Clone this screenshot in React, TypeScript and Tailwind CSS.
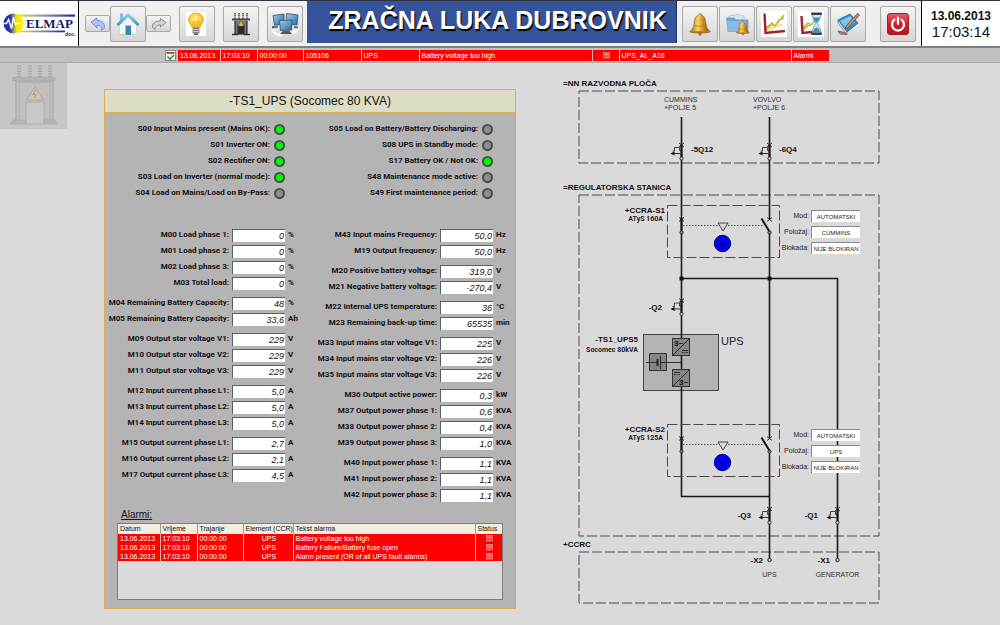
import React, { useId } from "react";

type Metric = { label: string; value: string; unit: string };
type Status = { label: string; on: boolean };

const leftStatuses: Status[] = [
  { label: "S00 Input Mains present (Mains OK):", on: true },
  { label: "S01 Inverter ON:", on: true },
  { label: "S02 Rectifier ON:", on: true },
  { label: "S03 Load on Inverter (normal mode):", on: true },
  { label: "S04 Load on Mains/Load on By-Pass:", on: false },
];

const rightStatuses: Status[] = [
  { label: "S05 Load on Battery/Battery Discharging:", on: false },
  { label: "S08 UPS in Standby mode:", on: false },
  { label: "S17 Battery OK / Not OK:", on: true },
  { label: "S48 Maintenance mode active:", on: false },
  { label: "S49 First maintenance period:", on: false },
];

const m = (label: string, value: string, unit: string): Metric => ({ label, value, unit });

const leftMetrics: Metric[][] = [
  [
    m("M00 Load phase 1:", "0", "%"),
    m("M01 Load phase 2:", "0", "%"),
    m("M02 Load phase 3:", "0", "%"),
    m("M03 Total load:", "0", "%"),
  ],
  [
    m("M04 Remaining Battery Capacity:", "48", "%"),
    m("M05 Remaining Battery Capacity:", "33,6", "Ah"),
  ],
  [
    m("M09 Output star voltage V1:", "229", "V"),
    m("M10 Output star voltage V2:", "229", "V"),
    m("M11 Output star voltage V3:", "229", "V"),
  ],
  [
    m("M12 Input current phase L1:", "5,0", "A"),
    m("M13 Input current phase L2:", "5,0", "A"),
    m("M14 Input current phase L3:", "5,0", "A"),
  ],
  [
    m("M15 Output current phase L1:", "2,7", "A"),
    m("M16 Output current phase L2:", "2,1", "A"),
    m("M17 Output current phase L3:", "4,5", "A"),
  ],
];

const rightMetrics: Metric[][] = [
  [
    m("M43 Input mains Frequency:", "50,0", "Hz"),
    m("M19 Output frequency:", "50,0", "Hz"),
  ],
  [
    m("M20 Positive battery voltage:", "319,0", "V"),
    m("M21 Negative battery voltage:", "-270,4", "V"),
  ],
  [
    m("M22 Internal UPS temperature:", "36", "°C"),
    m("M23 Remaining back-up time:", "65535", "min"),
  ],
  [
    m("M33 Input mains star voltage V1:", "225", "V"),
    m("M34 Input mains star voltage V2:", "226", "V"),
    m("M35 Input mains star voltage V3:", "226", "V"),
  ],
  [
    m("M36 Output active power:", "0,3", "kW"),
    m("M37 Output power phase 1:", "0,6", "KVA"),
    m("M38 Output power phase 2:", "0,4", "KVA"),
    m("M39 Output power phase 3:", "1,0", "KVA"),
  ],
  [
    m("M40 Input power phase 1:", "1,1", "KVA"),
    m("M41 Input power phase 2:", "1,1", "KVA"),
    m("M42 Input power phase 3:", "1,1", "KVA"),
  ],
];

const alarms = [
  "Battery voltage too high",
  "Battery Failure/Battery fuse open",
  "Alarm present (OR of all UPS fault alarms)",
];

/* ---------- icons ---------- */

function LogoMark() {
  return (
    <svg viewBox="0 0 76 28" className="h-7 w-[76px]" aria-label="ELMAP d.o.o.">
      <defs>
        <linearGradient id="logo-disc">
          <stop offset="0" stopColor="#1c2a9c" />
          <stop offset="0.35" stopColor="#2a3cc0" />
          <stop offset="0.65" stopColor="#f2e600" />
          <stop offset="1" stopColor="#fff200" />
        </linearGradient>
        <linearGradient id="logo-bar">
          <stop offset="0" stopColor="#f6ee30" />
          <stop offset="0.5" stopColor="#8f96a0" />
          <stop offset="1" stopColor="#1c2a9c" />
        </linearGradient>
      </defs>
      <rect x="12" y="4.500" width="62" height="2.200" fill="url(#logo-bar)" />
      <rect x="14" y="20.500" width="50" height="1.800" fill="url(#logo-bar)" />
      <circle cx="12.500" cy="13.500" r="10" fill="url(#logo-disc)" />
      <path d="M2.500 13.500h3l2-4 3 9 2-11 2 7 1-1h3" fill="none" stroke="#fff" strokeWidth="1.400" />
      <text x="25" y="18" className="font-['Liberation_Serif',serif] text-[13px] font-bold" fill="#14186e">ELMAP</text>
      <text x="64" y="26" className="font-['Liberation_Sans',sans-serif] text-[5px] font-bold" fill="#14186e">doo.</text>
    </svg>
  );
}

function UndoIcon() {
  return (
    <svg viewBox="0 0 16 14" className="h-[14px] w-4">
      <path d="M1 5 7 1v2.500c5 0 8 3 7.500 6.500-.5 2-2 3-3.500 3.300 1.500-2 .5-5-4-5V11z" fill="#a9c5f5" stroke="#5d86d6" strokeWidth="0.800" />
    </svg>
  );
}

function RedoIcon() {
  return (
    <svg viewBox="0 0 16 14" className="h-[14px] w-4">
      <path d="M15 5.500 9.500 1.500v2.300C5 3.800 1.500 6 1.500 9c0 2 1 3 2.800 3.500C3.500 10 6 8 9.500 8v2z" fill="#d4d4d4" stroke="#7b7b7b" strokeWidth="0.800" />
    </svg>
  );
}

function HomeIcon() {
  return (
    <svg viewBox="0 0 26 26" className="size-[26px]">
      <defs>
        <linearGradient id="home-roof" x2="0" y2="1">
          <stop offset="0" stopColor="#8fd0e6" />
          <stop offset="1" stopColor="#3493bd" />
        </linearGradient>
      </defs>
      <path d="M4.500 13v10h17V13L13 5z" fill="#f5f6f7" stroke="#d3d7da" strokeWidth="0.800" />
      <path d="M5 2.500h3v5L5 10z" fill="#7cc3de" />
      <path d="M2.500 14 13 4l10.500 10" fill="none" stroke="url(#home-roof)" strokeWidth="3" />
      <rect x="10.500" y="14.500" width="5.500" height="9.500" fill="#3689b5" />
      <path d="M3.500 24h8" stroke="#c4c8cb" strokeWidth="1" />
    </svg>
  );
}

function BulbIcon() {
  return (
    <svg viewBox="0 0 24 24" className="size-6">
      <rect width="20" height="24" x="1" fill="#fff" />
      <defs>
        <radialGradient id="bulb" cx="0.450" cy="0.400">
          <stop offset="0" stopColor="#fff6b0" />
          <stop offset="0.600" stopColor="#fbd43c" />
          <stop offset="1" stopColor="#f5b82c" />
        </radialGradient>
      </defs>
      <path d="M11 1c-4.500 0-7.500 3-7.500 6.800 0 3.200 2.500 4.700 3.500 7.700h8c1-3 3.500-4.500 3.500-7.700C18.500 4 15.500 1 11 1z" fill="url(#bulb)" stroke="#e0a028" strokeWidth="0.700" />
      <path d="m9.500 15-1-6 1.500 1.500 1-1.500 1 1.500L13.500 9l-1 6" fill="none" stroke="#e0a030" strokeWidth="0.600" />
      <rect x="7.500" y="15.500" width="7" height="6" rx="1.200" fill="#8b8574" />
      <path d="M7.500 17.500h7m-7 2h7" stroke="#d8d2be" strokeWidth="0.800" />
      <rect x="9" y="21.500" width="4" height="1.500" rx="0.700" fill="#4a463c" />
    </svg>
  );
}

function TransformerIcon() {
  return (
    <svg viewBox="0 0 22 24" className="h-6 w-[22px]">
      <path d="M5 1v6m4-6v6m4-6v6m4-6v6" stroke="#6d6d6d" strokeWidth="2" strokeDasharray="1.200 0.500" />
      <rect x="2" y="6.500" width="18" height="2" fill="#4b4b4b" />
      <rect x="4" y="8.500" width="14" height="14" fill="#777" />
      <path d="M5.500 9v13m11-13v13" stroke="#444" />
      <rect x="7.500" y="13" width="7" height="9.500" fill="#2c2c2c" />
      <path d="M11 9 13.500 14h-5z" fill="#f4c842" stroke="#8a6a10" strokeWidth="0.500" />
      <path d="M2 22.500h6m6 0h6" stroke="#333" strokeWidth="1.500" />
    </svg>
  );
}

function ComputersIcon() {
  return (
    <svg viewBox="0 0 32 26" className="h-[26px] w-8">
      <defs>
        <linearGradient id="screen" x2="1" y2="1">
          <stop offset="0" stopColor="#9fd4f2" />
          <stop offset="1" stopColor="#2467a3" />
        </linearGradient>
      </defs>
      <path d="M4 18c0 4 4 6 9 6m15-9c1 4 0 6-5 7" fill="none" stroke="#fafafa" strokeWidth="3" />
      <path d="M4 4.500 15 3v10L5.500 14z" fill="url(#screen)" stroke="#33475a" strokeWidth="0.800" />
      <path d="M17.500 2.500 29 4l-1 10-11-1z" fill="url(#screen)" stroke="#33475a" strokeWidth="0.800" />
      <path d="M10.500 9.500 23 9l-.5 10-11 .5z" fill="url(#screen)" stroke="#33475a" strokeWidth="0.800" />
      <path d="m14 20 6-.3 3 3.300H11z" fill="#4d5b66" />
      <path d="m3 15 6-.5v2L3 17.500z M25 15l4 .5v2l-4-.5z" fill="#5a6973" />
    </svg>
  );
}

function BellShape() {
  return (
    <>
      <path d="M13 2.500c-1 0-1.700.7-1.700 1.700C8 5.200 7.500 9 7 13c-.4 3.500-1.500 5.500-4 7.500h20c-2.500-2-3.600-4-4-7.500-.5-4-1-7.800-4.300-8.800 0-1-.7-1.700-1.700-1.700z" fill="url(#gold)" stroke="#8a5c10" strokeWidth="0.600" />
      <path d="M2.500 20.500c2 2 19 2 21 0" fill="#c88a1e" stroke="#8a5c10" strokeWidth="0.800" />
      <circle cx="13" cy="23" r="1.600" fill="#a36c14" />
      <path d="M7.500 14.500c3 1 8 1 11 0" fill="none" stroke="#9a6814" strokeWidth="0.600" />
    </>
  );
}

function BellIcon() {
  return (
    <svg viewBox="0 0 26 26" className="size-[26px]">
      <defs>
        <linearGradient id="gold">
          <stop offset="0" stopColor="#a86c12" />
          <stop offset="0.400" stopColor="#f6d268" />
          <stop offset="0.650" stopColor="#cf8e22" />
          <stop offset="1" stopColor="#80520c" />
        </linearGradient>
      </defs>
      <BellShape />
    </svg>
  );
}

function FolderBellIcon() {
  return (
    <svg viewBox="0 0 26 26" className="size-[26px]">
      <path d="M5 5 14 3.500 20 5v4H5z" fill="#d9e8f5" stroke="#9bb8d4" strokeWidth="0.600" />
      <path d="M2.500 7h8l1.500 2h12v11.500h-20z" fill="#6fa4da" stroke="#5b8fc4" strokeWidth="0.600" />
      <path d="M2.500 10h20l-1 10.500h-18z" fill="#94bee6" opacity="0.800" />
      <g transform="translate(10.500 8.500) scale(0.640)">
        <BellShape />
      </g>
    </svg>
  );
}

function ChartIcon() {
  return (
    <svg viewBox="0 0 26 26" className="size-[26px]">
      <rect width="26" height="26" fill="#fff" />
      <path d="m5 17 6-5 3 3 9-11" fill="none" stroke="#7bb64a" strokeWidth="1.200" />
      <path d="m5 19 5-5 4 1 4-6 5-2" fill="none" stroke="#f0b428" strokeWidth="1.800" />
      <path d="m8 20 6-4 7-3" fill="none" stroke="#f0d050" strokeWidth="1.200" />
      <path d="M3.500 2.500 4.500 22 24 20" fill="none" stroke="#a3202c" strokeWidth="2.400" />
    </svg>
  );
}

function HourglassChartIcon() {
  return (
    <svg viewBox="0 0 26 26" className="size-[26px]">
      <rect width="26" height="26" fill="#fff" />
      <path d="m5 17 5-5 3 2 6-7" fill="none" stroke="#7bb64a" strokeWidth="1.200" />
      <path d="m5 19 5-4 5-2" fill="none" stroke="#f0b428" strokeWidth="1.800" />
      <path d="M3.500 5 4.500 22 20 20.500" fill="none" stroke="#a3202c" strokeWidth="2.400" />
      <path d="M14 3h9c0 5-3 7-3.500 9.500C20 15 23 17 23 22h-9c0-5 3-7 3.500-9.500C17 10 14 8 14 3z" fill="#cfe8f4" stroke="#56788a" strokeWidth="0.700" />
      <path d="M15 6.500h7c-.8 2.500-2.500 4-3.500 5.500-1-1.500-2.700-3-3.500-5.500zM15 21c.5-3 2-4 3.500-4.500C20 17 21.500 18 22 21z" fill="#3f8fb5" />
      <rect x="13" y="1.500" width="11" height="2.500" rx="1" fill="#34424c" />
      <rect x="13" y="21.500" width="11" height="2.500" rx="1" fill="#34424c" />
    </svg>
  );
}

function NotebookIcon() {
  return (
    <svg viewBox="0 0 26 26" className="size-[26px]">
      <path d="m3 9 12-6 8 9-11 9z" fill="#2f8fce" stroke="#1c5f96" strokeWidth="0.800" />
      <path d="m5 10 10-5 5 6-9 7z" fill="#7cc6ee" />
      <path d="m3 9 9 12v2.500L3 12z" fill="#e6eef4" stroke="#1c5f96" strokeWidth="0.600" />
      <path d="M22.500 2.500 24.500 4 13 17l-3 1 1-3z" fill="#c58a5e" stroke="#5f3b22" strokeWidth="0.700" />
      <path d="m3 20 7 1.500 1.500 2L5 23z" fill="#b98b6a" stroke="#6a4a30" strokeWidth="0.700" />
    </svg>
  );
}

function PowerIcon() {
  return (
    <svg viewBox="0 0 22 22" className="size-[22px]">
      <defs>
        <linearGradient id="power" x2="0" y2="1">
          <stop offset="0" stopColor="#e4606a" />
          <stop offset="0.500" stopColor="#d0222c" />
          <stop offset="1" stopColor="#b8121e" />
        </linearGradient>
      </defs>
      <rect x="0.500" y="0.500" width="21" height="21" rx="2.500" fill="url(#power)" stroke="#a81c26" />
      <path d="M7.500 6.700a6 6 0 1 0 7 0" fill="none" stroke="#fff" strokeWidth="2.200" strokeLinecap="round" />
      <path d="M11 4.500v6.500" stroke="#fff" strokeWidth="2.200" strokeLinecap="round" />
    </svg>
  );
}

function AckIcon() {
  return (
    <svg viewBox="0 0 11 11" className="size-[11px]">
      <rect x="0.500" y="0.500" width="10" height="10" fill="#eef2ee" stroke="#8a8a8a" />
      <rect x="1.500" y="2" width="8" height="1.800" fill="#c23a34" />
      <path d="m2.500 6.500 2.500 2.500L9 5" fill="none" stroke="#3f9a3a" strokeWidth="1.700" />
    </svg>
  );
}

function StatusMark() {
  return (
    <svg viewBox="0 0 7 7" className="mx-auto block size-[7px]" aria-label="active">
      <rect x="0.500" y="0.500" width="6" height="5.500" fill="#ff3b3b" stroke="#ff8a8a" strokeWidth="0.800" />
      <path d="M1 2.500h5M3.500 1v4.500" stroke="#ff9c9c" strokeWidth="0.800" />
    </svg>
  );
}

function StationWatermark() {
  return (
    <svg viewBox="0 0 67 66" className="block h-[66px] w-[67px]">
      <rect width="67" height="66" fill="#c6c6c6" />
      <g fill="none" stroke="#adadad">
        <path d="M19 2v14M30 2v14M40 2v14M50 2v14" strokeWidth="4" strokeDasharray="1.500 1.200" />
        <rect x="13" y="14.500" width="42" height="3" fill="#b4b4b4" />
        <rect x="16" y="19" width="37" height="41" fill="#c0c0c0" strokeWidth="1.500" />
        <path d="M19 21v36M50 21v36" />
        <rect x="26" y="39" width="18" height="22" fill="#c9c9c9" />
        <path d="M10 61h16v-4H13zM57 61H44v-4h11z" fill="#b4b4b4" />
      </g>
      <path d="M35 24 43.500 37h-17z" fill="#cbc7b6" stroke="#b0aa94" />
      <path d="m35.500 27-2.500 4.500h3L34.500 35" fill="none" stroke="#a39a78" />
    </svg>
  );
}

/* ---------- header ---------- */

function ToolButton({ label, small, children }: { label: string; small?: boolean; children: React.ReactNode }) {
  return (
    <button
      type="button"
      aria-label={label}
      className={
        "flex shrink-0 items-center justify-center overflow-hidden rounded-xs border border-[#a9a9a9] bg-linear-to-b from-[#f4f4f4] to-[#d6d6d6] " +
        (small ? "h-[17px] w-[25px]" : "size-9")
      }
    >
      {children}
    </button>
  );
}

function Header() {
  return (
    <header className="flex h-12 items-center border-t border-b-2 border-t-[#33333d] border-b-[#808080] bg-[#f0f0f0]">
      <div className="flex h-full w-[79px] shrink-0 items-center justify-center border-r border-black bg-white">
        <LogoMark />
      </div>
      <nav className="ml-1.5 flex items-center" aria-label="Navigation">
        <ToolButton label="Back" small><UndoIcon /></ToolButton>
        <ToolButton label="Home"><HomeIcon /></ToolButton>
        <ToolButton label="Forward" small><RedoIcon /></ToolButton>
      </nav>
      <div className="ml-2 flex items-center gap-2">
        <ToolButton label="Lighting"><BulbIcon /></ToolButton>
        <ToolButton label="Substation"><TransformerIcon /></ToolButton>
        <ToolButton label="Network"><ComputersIcon /></ToolButton>
      </div>
      <h1 className="ml-1 flex h-[42px] min-w-0 flex-1 items-center justify-center self-start overflow-hidden border-r border-[#1d2f66] bg-[#34539a] pb-1 pl-3 text-[25px] leading-[38px] font-bold whitespace-nowrap text-white [text-shadow:1px_2px_1px_#000]">
        ZRAČNA LUKA DUBROVNIK
      </h1>
      <div className="ml-[5px] flex items-center gap-px">
        <ToolButton label="Alarms"><BellIcon /></ToolButton>
        <ToolButton label="Alarm archive"><FolderBellIcon /></ToolButton>
        <ToolButton label="Trends"><ChartIcon /></ToolButton>
        <ToolButton label="Trend history"><HourglassChartIcon /></ToolButton>
        <ToolButton label="Notes"><NotebookIcon /></ToolButton>
      </div>
      <div className="mr-[5px] ml-3.5">
        <ToolButton label="Shut down"><PowerIcon /></ToolButton>
      </div>
      <div className="flex h-full w-[79px] shrink-0 flex-col items-center justify-center border-l border-black bg-white">
        <time className="text-xs leading-[15px] font-bold">13.06.2013</time>
        <time className="text-[15px] leading-[15px]">17:03:14</time>
      </div>
    </header>
  );
}

function AlarmLine() {
  const cell = "border-l border-[#ffb0b0] p-0 pl-0.5 font-normal first:border-l-0";
  return (
    <div className="flex h-[15px] items-center gap-0.5 border-b border-[#a8a8a8] bg-[#c0c0c0] pl-[165px]">
      <button type="button" aria-label="Acknowledge"><AckIcon /></button>
      <table className="w-[651px] table-fixed border-collapse bg-[#fe0000] text-left text-[7px] leading-[11px] whitespace-nowrap text-white">
        <colgroup>
          <col className="w-[42px]" />
          <col className="w-[37px]" />
          <col className="w-[46px]" />
          <col className="w-[58px]" />
          <col className="w-[58px]" />
          <col className="w-[173px]" />
          <col className="w-[27px]" />
          <col className="w-[172px]" />
          <col className="w-[38px]" />
        </colgroup>
        <tbody>
          <tr>
            <td className={cell}>13.06.2013</td>
            <td className={cell}>17:03:10</td>
            <td className={cell}>00:00:00</td>
            <td className={cell}>105106</td>
            <td className={cell}>UPS</td>
            <td className={cell}>Battery voltage too high</td>
            <td className={cell}><StatusMark /></td>
            <td className={cell}>UPS_AL_A16</td>
            <td className={cell}>Alarmi</td>
          </tr>
        </tbody>
      </table>
    </div>
  );
}

/* ---------- UPS panel ---------- */

function StatusRow({ label, on }: Status) {
  return (
    <li className="flex h-4 items-center justify-end gap-1">
      <span>{label}</span>
      <span
        role="img"
        aria-label={on ? "on" : "off"}
        className={"size-[11px] shrink-0 rounded-full border-2 border-[#4a4a4a] " + (on ? "bg-[#00fb00]" : "bg-[#8e8e8e]")}
      />
    </li>
  );
}

function MetricRow({ label, value, unit }: Metric) {
  const id = useId();
  return (
    <div className="flex h-4 items-center justify-end gap-[3px]">
      <label htmlFor={id}>{label}</label>
      <input
        id={id}
        readOnly
        value={value}
        className="h-[13px] w-[53px] shrink-0 border-t border-l border-[#5f5f5f] bg-white pr-px text-right font-['Liberation_Sans',Arial,sans-serif] text-[9px] leading-3 font-normal italic outline-none"
      />
      <span className="w-[19px] shrink-0">{unit}</span>
    </div>
  );
}

function MetricColumn({ groups }: { groups: Metric[][] }) {
  return (
    <div className="flex flex-col gap-1">
      {groups.map((g) => (
        <div key={g[0].label}>
          {g.map((row) => (
            <MetricRow key={row.label} {...row} />
          ))}
        </div>
      ))}
    </div>
  );
}

function AlarmTable() {
  const head = "border-l border-[#9c9c90] p-0 pl-0.5 font-normal first:border-l-0";
  const cell = "border-l border-[#ffb0b0] p-0 pl-0.5 first:border-l-0";
  return (
    <div className="h-[77px] border border-[#7d7d7d] bg-[#dadada]">
      <table className="w-full table-fixed border-collapse text-left text-[7px] whitespace-nowrap">
        <colgroup>
          <col className="w-[42px]" />
          <col className="w-[37px]" />
          <col className="w-[46px]" />
          <col className="w-[50px]" />
          <col />
          <col className="w-[27px]" />
        </colgroup>
        <thead className="bg-[#f1eee1] leading-[10px]">
          <tr>
            <th className={head}>Datum</th>
            <th className={head}>Vrijeme</th>
            <th className={head}>Trajanje</th>
            <th className={head}>Element (CCR)</th>
            <th className={head}>Tekst alarma</th>
            <th className={head}>Status</th>
          </tr>
        </thead>
        <tbody className="bg-[#fe0000] leading-[9px] text-white">
          {alarms.map((text) => (
            <tr key={text}>
              <td className={cell}>13.06.2013</td>
              <td className={cell}>17:03:10</td>
              <td className={cell}>00:00:00</td>
              <td className={cell + " text-center"}>UPS</td>
              <td className={cell}>{text}</td>
              <td className={cell}><StatusMark /></td>
            </tr>
          ))}
        </tbody>
      </table>
    </div>
  );
}

function UpsPanel() {
  return (
    <section className="mt-[26px] border border-[#e2ac4c] bg-[#b4b4b4] pb-2">
      <h2 className="border-b border-[#e2ac4c] bg-[#dedec6] text-center text-xs leading-[22px]">-TS1_UPS (Socomec 80 KVA)</h2>
      <div className="grid grid-cols-2 font-[Roboto,'Liberation_Sans',sans-serif] text-[8px] leading-4 font-bold whitespace-nowrap">
        <div className="pr-[3px]">
          <ul className="mt-2 mb-[26px] pr-[22px]">
            {leftStatuses.map((s) => <StatusRow key={s.label} {...s} />)}
          </ul>
          <MetricColumn groups={leftMetrics} />
        </div>
        <div>
          <ul className="mt-2 mb-[26px] pr-[22px]">
            {rightStatuses.map((s) => <StatusRow key={s.label} {...s} />)}
          </ul>
          <MetricColumn groups={rightMetrics} />
        </div>
      </div>
      <div className="mt-1 px-3">
        <h3 className="ml-1 text-[10px] leading-4 underline">Alarmi:</h3>
        <AlarmTable />
      </div>
    </section>
  );
}

/* ---------- single-line diagram ---------- */

function Cross({ x, y }: { x: number; y: number }) {
  return <path d={`M${x - 2.5} ${y - 2}l5 4m0-4l-5 4`} stroke="#222" strokeWidth="0.900" />;
}

function Breaker({ x, y }: { x: number; y: number }) {
  return (
    <g>
      <Cross x={x} y={y} />
      <path d={`M${x - 9} ${y + 6}h2v-3.500h5v3h2`} fill="none" stroke="#333" strokeWidth="0.900" />
      <path d={`M${x - 8} ${y + 8.5}h7`} stroke="#222" strokeWidth="0.900" />
      <path d={`M${x - 11} ${y + 8.5}l4-2v4z`} fill="#111" />
      <path d={`M${x} ${y}v12`} stroke="#111" strokeWidth="2" />
      <circle cx={x} cy={y + 13.5} r="1.600" fill="#dadada" stroke="#222" strokeWidth="0.900" />
    </g>
  );
}

function TransferSwitch({ y }: { y: number }) {
  return (
    <g>
      <rect x="667.500" y={y} width="112" height="52" fill="none" stroke="#4a4a4a" strokeDasharray="10 3" />
      <Cross x={681.5} y={y + 14} />
      <path d={`M681.500 ${y + 12}v15`} stroke="#111" strokeWidth="2" />
      <circle cx="681.500" cy={y + 27} r="1.600" fill="#888" stroke="#222" strokeWidth="0.900" />
      <path d={`M683 ${y + 20}h80`} stroke="#444" strokeWidth="0.900" strokeDasharray="1.500 1.500" />
      <path d={`M718 ${y + 17.5}h10l-5 8z`} fill="#dadada" stroke="#333" strokeWidth="0.900" />
      <circle cx="722.500" cy={y + 38} r="8.200" fill="#0000fa" stroke="#000060" />
      <text x="722.500" y={y + 41} textAnchor="middle" className="text-[7px]" fill="#00004a">M</text>
      <Cross x={769.5} y={y + 14} />
      <path d={`M761.500 ${y + 13}L770 ${y + 27}`} stroke="#111" strokeWidth="2" />
      <circle cx="769.500" cy={y + 27} r="1.600" fill="#888" stroke="#222" strokeWidth="0.900" />
    </g>
  );
}

function Schematic() {
  return (
    <svg viewBox="560 76 325 532" className="block h-[532px] w-[325px] font-['Liberation_Sans',Arial,sans-serif]">
      <g fill="none" stroke="#4a4a4a" strokeDasharray="10 3">
        <rect x="579" y="91" width="300" height="72" />
        <rect x="579" y="195" width="300" height="341" />
        <rect x="579" y="552" width="300" height="51" />
      </g>

      <rect x="643.500" y="334.500" width="75" height="56" fill="#b4b4b4" stroke="#444" />

      <g fill="none" stroke="#1a1a1a" strokeWidth="1.600">
        <path d="M681.500 117V338M681.500 356V369M681.500 387V496.500H769.500" />
        <path d="M769.500 117V219M769.500 232V438M769.500 451V558" />
        <path d="M681.500 278.500H837.500V558" />
      </g>
      <g fill="#111">
        <rect x="679.500" y="276.500" width="4" height="4" />
        <rect x="767.500" y="276.500" width="4" height="4" />
      </g>

      <TransferSwitch y={205.5} />
      <TransferSwitch y={424.5} />
      <Breaker x={681.5} y={145} />
      <Breaker x={769.5} y={145} />
      <Breaker x={681.5} y={300.5} />
      <Breaker x={769.5} y={509} />
      <Breaker x={837.5} y={509} />

      <g fill="#858585" stroke="#333">
        <rect x="672.500" y="338.500" width="17" height="17" />
        <rect x="672.500" y="369.500" width="17" height="17" />
        <rect x="649.500" y="353.500" width="17" height="17" />
      </g>
      <g stroke="#222" strokeWidth="0.900" fill="none">
        <path d="M672.500 355.500l17-17M672.500 386.500l17-17" />
        <path d="M682 350.500h6M682 352.500h1.500m1 0h1m1 0h1.500M674 372.500h6M674 374.500h1.500m1 0h1m1 0h1.500" />
        <path d="M646 362.500h10.500M660.500 362.500h21M660.500 356v13" />
        <path d="M657.500 359v7" strokeWidth="2" />
      </g>
      <g className="text-[8px] font-bold" fill="#111">
        <text x="674" y="346">3~</text>
        <text x="679" y="385">3~</text>
      </g>

      <g fill="#dadada" stroke="#222">
        <circle cx="769.500" cy="560" r="1.700" />
        <circle cx="837.500" cy="560" r="1.700" />
      </g>

      <g className="text-[8px] font-bold" fill="#111">
        <text x="563" y="86">=NN RAZVODNA PLOČA</text>
        <text x="563" y="190">=REGULATORSKA STANICA</text>
        <text x="563" y="547">+CCRC</text>
        <text x="691" y="152">-5Q12</text>
        <text x="779" y="152">-6Q4</text>
        <text x="665" y="213" textAnchor="end">+CCRA-S1</text>
        <text x="665" y="432" textAnchor="end">+CCRA-S2</text>
        <text x="662" y="310" textAnchor="end">-Q2</text>
        <text x="638" y="342" textAnchor="end">-TS1_UPS5</text>
        <text x="751" y="518" textAnchor="end">-Q3</text>
        <text x="818" y="518" textAnchor="end">-Q1</text>
        <text x="763" y="563" textAnchor="end">-X2</text>
        <text x="830" y="563" textAnchor="end">-X1</text>
      </g>
      <g className="font-[Roboto,'Liberation_Sans',sans-serif] text-[7px] font-bold" fill="#222" textAnchor="end">
        <text x="663" y="221">ATyS 160A</text>
        <text x="663" y="440">ATyS 125A</text>
        <text x="638" y="352">Socomec 80kVA</text>
      </g>
      <g className="text-[7px]" fill="#333">
        <text x="664" y="102">CUMMINS</text>
        <text x="664" y="110">+POLJE 5</text>
        <text x="753" y="102">VOVLVO</text>
        <text x="753" y="110">+POLJE 6</text>
        <text x="769.500" y="577" textAnchor="middle">UPS</text>
        <text x="837.500" y="577" textAnchor="middle">GENERATOR</text>
      </g>
      <text x="721" y="345" className="text-[11px]" fill="#222">UPS</text>
    </svg>
  );
}

function SwitchField({ label, value }: { label: string; value: string }) {
  const id = useId();
  return (
    <div className="flex h-4 items-center justify-end gap-0.5">
      <label htmlFor={id} className="text-[7px] leading-4 text-[#222]">{label}</label>
      <input
        id={id}
        readOnly
        value={value}
        className="h-3 w-[49px] shrink-0 border-t border-l border-[#8a8a8a] bg-white text-center text-[6px] leading-3 text-[#222] outline-none"
      />
    </div>
  );
}

function SwitchState({ position }: { position: string }) {
  return (
    <>
      <SwitchField label="Mod:" value="AUTOMATSKI" />
      <SwitchField label="Položaj:" value={position} />
      <SwitchField label="Blokada:" value="NIJE BLOKIRAN" />
    </>
  );
}

export default function App() {
  return (
    <div className="min-h-screen bg-[#dadada] font-['Liberation_Sans',Arial,sans-serif] text-[#111]">
      <Header />
      <AlarmLine />
      <main className="grid grid-cols-[104px_minmax(0,412fr)_minmax(0,484fr)] items-start">
        <StationWatermark />
        <UpsPanel />
        <section className="pt-[13px] pl-11" aria-label="Single-line diagram">
          <div className="relative w-[325px]">
            <Schematic />
            <div className="absolute top-[132px] left-[220px] w-20">
              <SwitchState position="CUMMINS" />
            </div>
            <div className="absolute top-[351px] left-[220px] w-20">
              <SwitchState position="UPS" />
            </div>
          </div>
        </section>
      </main>
    </div>
  );
}
